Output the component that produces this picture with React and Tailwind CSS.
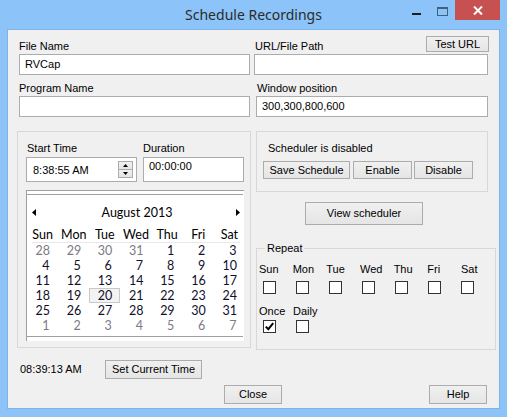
const DAYS = ['Sun', 'Mon', 'Tue', 'Wed', 'Thu', 'Fri', 'Sat']

const CELLS = [
  ...[28, 29, 30, 31].map((d) => ({ d, out: true })),
  ...Array.from({ length: 31 }, (_, i) => ({ d: i + 1 })),
  ...[1, 2, 3, 4, 5, 6, 7].map((d) => ({ d, out: true })),
]

function Btn({ className = '', children }) {
  return (
    <div className={`flex items-center justify-center border border-[#acacac] bg-linear-to-b from-[#f0f0f0] to-[#e5e5e5] text-black ${className}`}>
      {children}
    </div>
  )
}

function Field({ className = '', children }) {
  return (
    <div className={`flex items-center border border-[#acacac] bg-white pl-[5px] ${className}`}>{children}</div>
  )
}

function Check({ checked }) {
  return (
    <div className="flex h-[13px] w-[13px] items-center justify-center border border-[#333] bg-white">
      {checked && (
        <svg width="11" height="11" viewBox="0 0 11 11">
          <path d="M1.8 5.6 L4.3 8.2 L9.2 2.2" fill="none" stroke="#000" strokeWidth="2" />
        </svg>
      )}
    </div>
  )
}

function Calendar() {
  return (
    <div className="mt-[8px] h-[151px] w-[218px] border-l border-t border-[#a0a0a0] bg-white font-['Lato',sans-serif] text-[12.5px] leading-[15px] text-black">
      <div className="h-[3px]" />
      <div className="mr-[1px] border-t border-[#a0a0a0]" />
      <div className="mt-[10px] flex h-[15px] items-center justify-between pl-[5px] pr-[4px]">
        <svg width="4" height="7" viewBox="0 0 4 7"><polygon points="4,0 0,3.5 4,7" fill="#000" /></svg>
        <span className="pl-[2px]">August 2013</span>
        <svg width="4" height="7" viewBox="0 0 4 7"><polygon points="0,0 4,3.5 0,7" fill="#000" /></svg>
      </div>
      <div className="mt-[7px] grid w-[218px] grid-cols-7">
        {DAYS.map((d) => (
          <div key={d} className="h-[15px] text-center">{d}</div>
        ))}
      </div>
      <div className="ml-[5px] h-px w-[208px] bg-[#e8e8e8]" />
      <div className="grid w-[218px] grid-cols-7">
        {CELLS.map((c, i) => (
          <div
            key={i}
            className={`flex h-[15px] items-center justify-center ${
              !c.out && c.d === 20 ? 'border border-[#c8c8c8] bg-[#f3f3f3]' : ''
            } ${c.out ? 'text-[#7d7a86]' : 'text-[#10102a]'}`}
          >
            <span className="w-[14px] text-right">{c.d}</span>
          </div>
        ))}
      </div>
      <div className="mr-[1px] mt-[3px] border-t border-[#a0a0a0]" />
    </div>
  )
}

export default function App() {
  return (
    <div className="flex h-[417px] w-[507px] flex-col overflow-hidden bg-[#8cc3f8] font-['Liberation_Sans',Arial,sans-serif] text-[11px] leading-[13px] text-black">
      {/* title bar */}
      <div className="grid h-[29px] grid-cols-[1fr_auto_1fr]">
        <div />
        <div className="pt-[5px] font-['Noto_Sans',sans-serif] text-[14px] leading-[20px] text-[#2b2b2b]">Schedule Recordings</div>
        <div className="flex items-start justify-end pr-[7px]">
          <div className="flex h-[20px] w-[26px] items-start justify-center pt-[13px]">
            <div className="h-[2px] w-[9px] bg-[#1e1e1e]" />
          </div>
          <div className="flex h-[20px] w-[26px] items-start justify-center pt-[7px]">
            <div className="h-[9px] w-[11px] border border-t-2 border-[#41607f]" />
          </div>
          <div className="flex h-[20px] w-[45px] items-center justify-center bg-[#c75050]">
            <svg width="10" height="9" viewBox="0 0 10 9">
              <path d="M1 0.5 L9 8.5 M9 0.5 L1 8.5" stroke="#fff" strokeWidth="2" />
            </svg>
          </div>
        </div>
      </div>

      {/* client area */}
      <div className="ml-[7px] flex h-[380px] w-[493px] flex-col border border-[#7fb2e5] bg-[#f0f0f0]">
        <div className="flex gap-[4px] pl-[11px] pt-[6px]">
          <div className="flex w-[231px] flex-col">
            <div className="flex h-[18px] items-end pb-[1px]">File Name</div>
            <Field className="h-[21px]">RVCap</Field>
          </div>
          <div className="flex w-[234px] flex-col">
            <div className="flex h-[18px] justify-between">
              <span className="self-end pb-[1px] pl-px">URL/File Path</span>
              <Btn className="-mr-px h-[16px] w-[63px]">Test URL</Btn>
            </div>
            <Field className="h-[21px]" />
          </div>
        </div>

        <div className="mt-[7px] flex gap-[6px] pl-[11px]">
          <div className="flex w-[231px] flex-col">
            <div className="h-[13px]">Program Name</div>
            <Field className="mt-px h-[21px]" />
          </div>
          <div className="flex w-[232px] flex-col">
            <div className="h-[13px] pl-px">Window position</div>
            <Field className="mt-px h-[21px]">300,300,800,600</Field>
          </div>
        </div>

        <div className="mt-[14px] flex gap-[5px] pl-[9px]">
          <div className="h-[217px] w-[234px] border border-[#d8d8d8] pl-[8px] pt-[10px]">
            <div className="grid grid-cols-[111px_101px] gap-x-[6px]">
              <div className="flex flex-col">
                <div className="h-[13px] pl-px">Start Time</div>
                <div className="mt-[2px] flex h-[25px] items-center justify-between border border-[#acacac] bg-white pl-[6px] pr-[3px]">
                  <span className="pt-px">8:38:55 AM</span>
                  <div className="flex h-[17px] w-[15px] flex-col">
                    <div className="flex h-[9px] items-center justify-center border border-[#acacac] bg-linear-to-b from-[#f0f0f0] to-[#e5e5e5]">
                      <svg width="5" height="3" viewBox="0 0 5 3"><polygon points="0,3 2.5,0 5,3" fill="#000" /></svg>
                    </div>
                    <div className="-mt-px flex h-[9px] items-center justify-center border border-[#acacac] bg-linear-to-b from-[#f0f0f0] to-[#e5e5e5]">
                      <svg width="5" height="3" viewBox="0 0 5 3"><polygon points="0,0 5,0 2.5,3" fill="#000" /></svg>
                    </div>
                  </div>
                </div>
              </div>
              <div className="flex flex-col">
                <div className="h-[13px]">Duration</div>
                <div className="mt-[2px] h-[25px] border border-[#acacac] bg-white pl-[5px] pt-[2px]">00:00:00</div>
              </div>
            </div>
            <Calendar />
          </div>

          <div className="flex w-[234px] flex-col">
            <div className="h-[61px] w-[232px] border border-[#d8d8d8] pl-[6px] pt-[10px]">
              <div className="h-[13px] pl-[5px]">Scheduler is disabled</div>
              <div className="mt-[6px] flex">
                <Btn className="h-[18px] w-[87px]">Save Schedule</Btn>
                <Btn className="ml-[3px] h-[18px] w-[59px]">Enable</Btn>
                <Btn className="ml-[2px] h-[18px] w-[59px]">Disable</Btn>
              </div>
            </div>
            <Btn className="ml-[49px] mt-[10px] h-[23px] w-[118px]">View scheduler</Btn>
            <fieldset className="mt-[17px] h-[108px] w-[234px] border border-[#d8d8d8] pl-[2px]">
              <legend className="ml-[6px] px-[2px] leading-[12px]">Repeat</legend>
              <div className="mt-[9px] grid grid-cols-[repeat(7,33.67px)]">
                {DAYS.map((d) => (
                  <div key={d} className="h-[13px]">{d}</div>
                ))}
              </div>
              <div className="mt-[5px] grid grid-cols-[repeat(7,33px)] pl-[4px]">
                {DAYS.map((d) => (
                  <Check key={d} />
                ))}
              </div>
              <div className="mt-[11px] grid grid-cols-[repeat(2,34px)]">
                <div className="h-[13px]">Once</div>
                <div className="h-[13px]">Daily</div>
              </div>
              <div className="mt-[2px] grid grid-cols-[repeat(2,33px)] pl-[4px]">
                <Check checked />
                <Check />
              </div>
            </fieldset>
          </div>
        </div>

        <div className="mt-[10px] flex items-center pl-[12px]">
          <span className="w-[85px]">08:39:13 AM</span>
          <Btn className="h-[19px] w-[97px]">Set Current Time</Btn>
        </div>
        <div className="mt-[6px] flex pl-[216px]">
          <Btn className="h-[19px] w-[58px]">Close</Btn>
          <Btn className="ml-[147px] h-[19px] w-[58px]">Help</Btn>
        </div>
      </div>
    </div>
  )
}
